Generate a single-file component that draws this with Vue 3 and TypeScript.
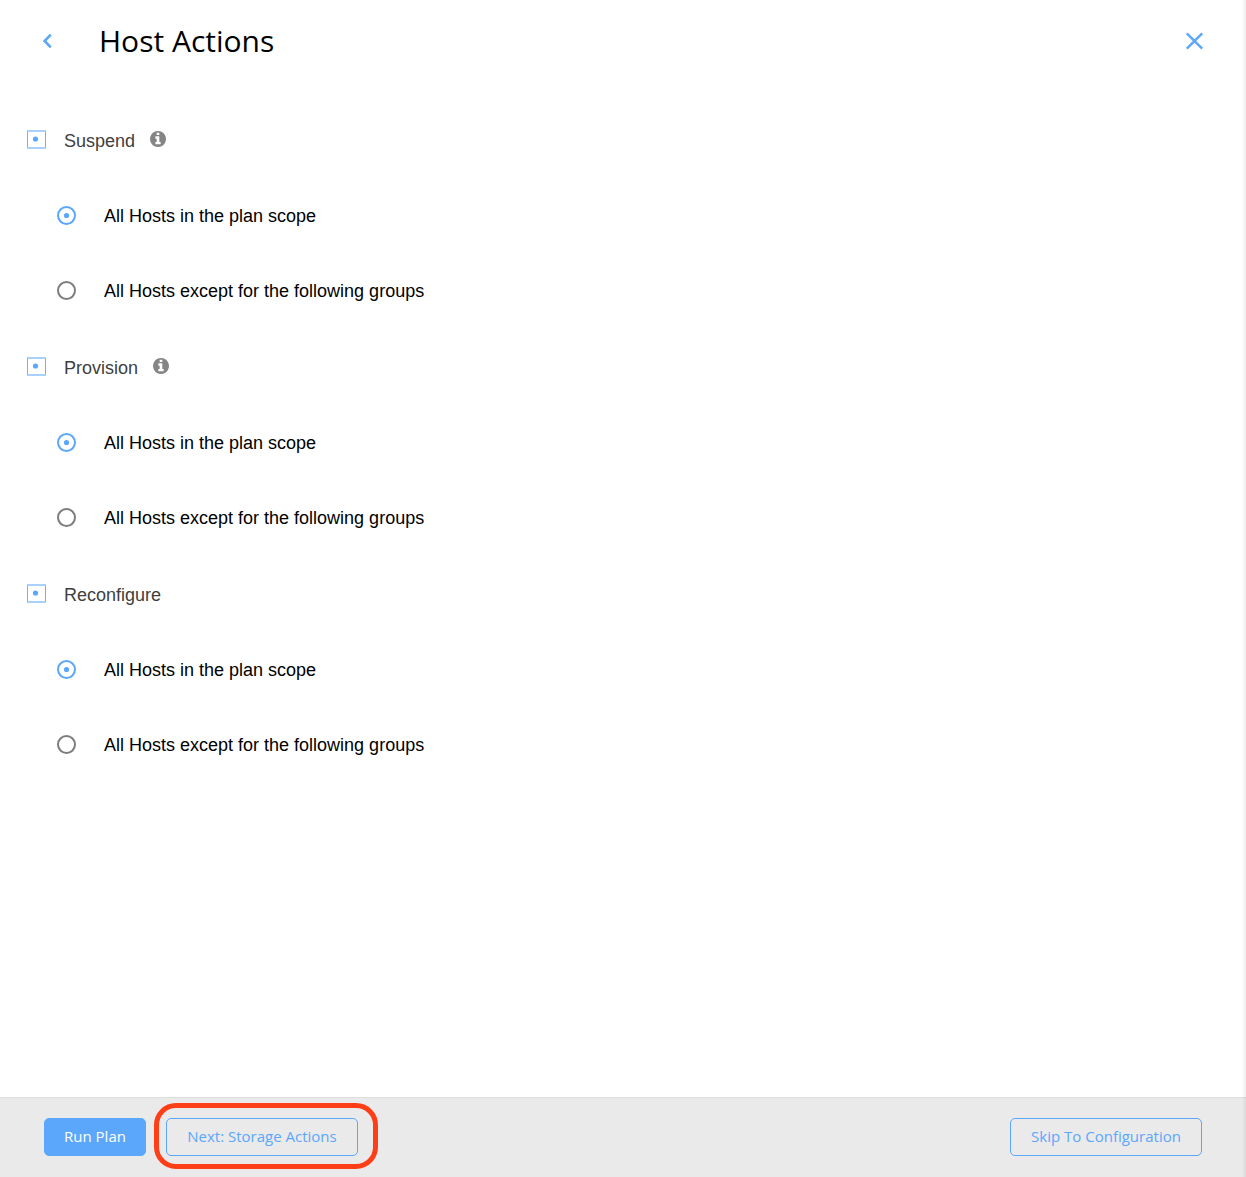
<script setup lang="ts">
import { ref } from 'vue'

interface ActionGroup {
  name: string
  info: boolean
  selected: number
}

const scopes: string[] = [
  'All Hosts in the plan scope',
  'All Hosts except for the following groups',
]

const groups = ref<ActionGroup[]>([
  { name: 'Suspend', info: true, selected: 0 },
  { name: 'Provision', info: true, selected: 0 },
  { name: 'Reconfigure', info: false, selected: 0 },
])
</script>

<template>
  <div class="panel">
    <header class="head">
      <svg class="back" width="12" height="16" viewBox="0 0 12 16">
        <path d="M9.8 1.6 3.6 8l6.2 6.4" />
      </svg>
      <h1>Host Actions</h1>
      <svg class="close" width="20" height="20" viewBox="0 0 20 20">
        <path d="M2.3 2.3 17.7 17.7M17.7 2.3 2.3 17.7" transform="translate(.5 0)" />
      </svg>
    </header>

    <main class="body">
      <section v-for="group in groups" :key="group.name" class="group">
        <div class="row title">
          <svg class="check" width="19" height="19" viewBox="0 0 19 19">
            <path class="side" d="M.5 .5V18.5M18.5 .5V18.5" />
            <path class="edge" d="M.5 1H18.5M.5 18H18.5" />
            <circle cx="8.5" cy="9" r="2.6" />
          </svg>
          <span class="name">{{ group.name }}</span>
          <svg v-if="group.info" class="info" width="16" height="16" viewBox="0 0 1536 1536">
            <path
              d="M1024 1248v-160q0-14-9-23t-23-9h-96v-512q0-14-9-23t-23-9h-320q-14 0-23 9t-9 23v160q0 14 9 23t23 9h96v320h-96q-14 0-23 9t-9 23v160q0 14 9 23t23 9h448q14 0 23-9t9-23zm-128-896v-160q0-14-9-23t-23-9h-192q-14 0-23 9t-9 23v160q0 14 9 23t23 9h192q14 0 23-9t9-23zm640 416q0 209-103 385.5t-279.5 279.5-385.5 103-385.5-103-279.5-279.5-103-385.5 103-385.5 279.5-279.5 385.5-103 385.5 103 279.5 279.5 103 385.5z"
            />
          </svg>
        </div>
        <div
          v-for="(scope, i) in scopes"
          :key="scope"
          class="row option"
          :class="{ on: group.selected === i }"
          @click="group.selected = i"
        >
          <svg class="radio" width="19" height="19" viewBox="0 0 19 19">
            <circle class="ring" cx="9.5" cy="9.5" r="8.5" />
            <circle v-if="group.selected === i" class="dot" cx="9.5" cy="9.5" r="2.6" />
          </svg>
          <span class="label">{{ scope }}</span>
        </div>
      </section>
    </main>

    <footer class="foot">
      <button class="btn primary">Run Plan</button>
      <div class="marked">
        <button class="btn next">Next: Storage Actions</button>
      </div>
      <button class="btn skip">Skip To Configuration</button>
    </footer>
    <div class="shade"></div>
  </div>
</template>

<style>
body {
  margin: 0;
}
</style>

<style scoped>
.panel {
  position: relative;
  display: flex;
  flex-direction: column;
  box-sizing: border-box;
  width: 1246px;
  height: 1177px;
  overflow: hidden;
  background: #fff;
  font-family: 'Liberation Sans', Arial, sans-serif;
}
.head {
  display: flex;
  align-items: center;
  height: 82px;
  padding: 0 42px 0 41px;
}
.head svg {
  fill: none;
  stroke: #5ba7fc;
}
.back {
  stroke-width: 2.6;
}
.close {
  margin-left: auto;
  stroke-width: 2.4;
}
h1 {
  margin: 0 0 0 46px;
  font: 400 30px/40px 'Open Sans', sans-serif;
  color: #000;
  white-space: nowrap;
}
.body {
  flex: 1;
  padding-top: 21px;
}
.group {
  margin-bottom: 2px;
}
.row {
  display: flex;
  align-items: center;
  height: 75px;
  font-size: 18px;
  line-height: 24px;
  white-space: nowrap;
}
.title {
  padding-left: 27px;
  color: #404040;
}
.check {
  margin-top: -2px;
  fill: #5ba7fc;
}
.side {
  stroke: #6fb2fc;
}
.edge {
  stroke: #a8d1fd;
  stroke-width: 2;
}
.name {
  margin-left: 18px;
}
.info {
  margin: -4px 0 0 14.7px;
  fill: #858585;
}
.option {
  padding-left: 57px;
  color: #000;
}
.radio {
  margin-top: -1px;
}
.ring {
  fill: none;
  stroke: #7d7d7d;
  stroke-width: 2;
}
.on .ring {
  stroke: #5ba7fc;
}
.dot {
  fill: #5ba7fc;
}
.label {
  margin-left: 28px;
}
.foot {
  display: flex;
  align-items: center;
  box-sizing: border-box;
  height: 80px;
  padding: 0 44px 1px;
  border-top: 1px solid #dedede;
  background: #eaeaea;
}
.btn {
  display: block;
  box-sizing: border-box;
  height: 38px;
  padding: 0 0 2px;
  border: 1px solid #5ba7fc;
  border-radius: 5px;
  background: transparent;
  color: #5ba7fc;
  font: 400 15px/20px 'Open Sans', sans-serif;
  white-space: nowrap;
}
.primary {
  width: 102px;
  background: #5ba7fc;
  color: #fff;
}
.marked {
  position: relative;
  margin-left: 20px;
}
.marked::after {
  content: '';
  position: absolute;
  inset: -15.5px -19.5px -12.5px -12.5px;
  border: 5px solid #fd3e16;
  border-radius: 22px;
  pointer-events: none;
}
.next,
.skip {
  width: 192px;
}
.skip {
  margin-left: auto;
}
.shade {
  position: absolute;
  top: 0;
  right: 0;
  width: 4px;
  height: 100%;
  background: linear-gradient(to right, rgba(0, 0, 0, 0), rgba(0, 0, 0, 0.07));
}
</style>
